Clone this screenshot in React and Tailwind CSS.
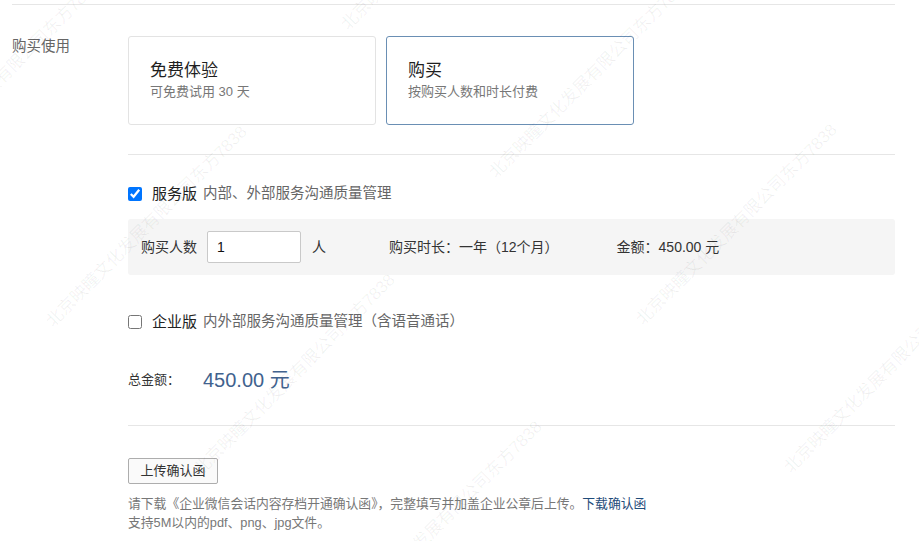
import { useState } from 'react';

const WATERMARK = '北京映瞳文化发展有限公司东方7838';

const watermarks = () => {
  const list = [];
  for (let a = -6; a <= 6; a++) {
    for (let b = -3; b <= 3; b++) {
      const x = 55 + 147.5 * a + 295 * b;
      const y = 330 + 147.5 * a - 297 * b;
      if (x > -320 && x < 919 && y > -10 && y < 860) list.push({ x, y });
    }
  }
  return list;
};

const Card = ({ title, desc, active }) => (
  <div
    className={`w-[248px] h-[89px] rounded-[3px] border bg-white px-[21px] pt-[22px] ${
      active ? 'border-[#6a8fb4]' : 'border-[#e3e3e3]'
    }`}
  >
    <div className="text-[17px] leading-[24px] text-[#1f1f1f]">{title}</div>
    <div className="mt-[0px] text-[13px] leading-[18px] text-[#777]">{desc}</div>
  </div>
);

const Edition = ({ checked, onChange, name, desc }) => (
  <label className="flex items-center h-[20px]">
    <input
      type="checkbox"
      checked={checked}
      onChange={onChange}
      className="m-0 w-[14px] h-[14px]"
    />
    <span className="ml-[10px] text-[15px] text-[#222]">{name}</span>
    <span className="ml-[6px] text-[14.5px] text-[#666]">{desc}</span>
  </label>
);

export default function App() {
  const [service, setService] = useState(true);
  const [enterprise, setEnterprise] = useState(false);
  const [count, setCount] = useState('1');

  return (
    <div
      className="relative w-full h-[541px] overflow-hidden bg-white"
      style={{ fontFamily: '"Liberation Sans", "Noto Sans CJK SC", sans-serif' }}
    >
      <div className="mt-[4px] ml-[12px] w-[883px] h-px bg-[#e6e6e6]" />

      <div className="flex mt-[31px] ml-[12px]">
        <div className="w-[116px] text-[14.5px] leading-[20px] text-[#666]">购买使用</div>
        <div className="flex gap-[10px]">
          <Card title="免费体验" desc="可免费试用 30 天" />
          <Card title="购买" desc="按购买人数和时长付费" active />
        </div>
      </div>

      <div className="ml-[128px] w-[767px]">
        <div className="mt-[29px] h-px bg-[#e6e6e6]" />

        <div className="mt-[29px]">
          <Edition
            checked={service}
            onChange={() => setService(!service)}
            name="服务版"
            desc="内部、外部服务沟通质量管理"
          />
        </div>

        <div className="mt-[15px] h-[56px] rounded-[3px] bg-[#f5f5f5] flex items-center pl-[13px] text-[14px] text-[#333]">
          <span>购买人数</span>
          <input
            value={count}
            onChange={(e) => setCount(e.target.value)}
            className="ml-[10px] w-[94px] h-[32px] rounded-[2px] border border-[#c9c9c9] bg-white pl-[9px] text-[14px] text-[#111] outline-none"
          />
          <span className="ml-[11px]">人</span>
          <span className="ml-[63px]">购买时长：一年（12个月）</span>
          <span className="ml-[58px]">金额：450.00 元</span>
        </div>

        <div className="mt-[37px]">
          <Edition
            checked={enterprise}
            onChange={() => setEnterprise(!enterprise)}
            name="企业版"
            desc="内外部服务沟通质量管理（含语音通话）"
          />
        </div>

        <div className="mt-[33px] h-[30px] flex items-center">
          <span className="w-[75px] text-[13px] text-[#333]">总金额：</span>
          <span className="text-[20px] text-[#41628e]">450.00 元</span>
        </div>

        <div className="mt-[30px] h-px bg-[#e6e6e6]" />

        <button className="mt-[32px] w-[90px] h-[26px] rounded-[2px] border border-[#adadad] bg-[#fafafa] text-[13px] text-[#333]">
          上传确认函
        </button>

        <div className="mt-[10px] text-[12.8px] leading-[19px] text-[#777]">
          <div>
            请下载《企业微信会话内容存档开通确认函》，完整填写并加盖企业公章后上传。
            <a className="text-[#1f4c7a] cursor-pointer">下载确认函</a>
          </div>
          <div>支持5M以内的pdf、png、jpg文件。</div>
        </div>
      </div>

      <div className="pointer-events-none absolute inset-0">
        {watermarks().map((w, i) => (
          <span
            key={i}
            className="absolute whitespace-nowrap text-[17px] leading-none text-black/[0.06]"
            style={{
              left: w.x,
              top: w.y - 17,
              transform: 'rotate(-45deg)',
              transformOrigin: '0% 100%',
            }}
          >
            {WATERMARK}
          </span>
        ))}
      </div>
    </div>
  );
}
